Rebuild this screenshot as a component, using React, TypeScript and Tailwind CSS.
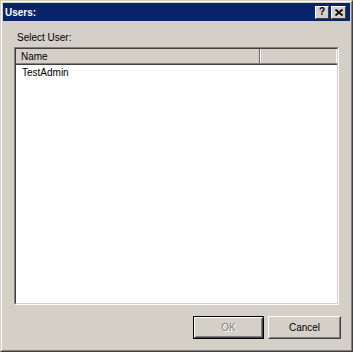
export default function App() {
  const font = { fontFamily: '"Liberation Sans", Arial, sans-serif' };
  return (
    <div
      className="w-[353px] h-[352px] bg-[#d4d0c8] border border-t-[#d4d0c8] border-l-[#d4d0c8] border-b-[#404040] border-r-[#404040] text-[10px] leading-[12px] text-black"
      style={font}
    >
      <div className="h-full border border-t-white border-l-white border-b-[#808080] border-r-[#808080] p-px flex flex-col">
        {/* Title bar */}
        <div className="h-[18px] bg-[#0a246a] flex items-center justify-between pl-[2px] pr-[4px]">
          <span className="text-white font-bold text-[10px] leading-[12px] mt-[1px]">Users:</span>
          <div className="flex gap-[2px] items-center">
            <div className="w-[14px] h-[13px] bg-[#d4d0c8] border border-t-white border-l-white border-b-[#404040] border-r-[#404040] flex items-center justify-center">
              <span className="font-bold text-[10px] leading-[10px] text-black">?</span>
            </div>
            <div className="w-[15px] h-[13px] bg-[#d4d0c8] border border-t-white border-l-white border-b-[#404040] border-r-[#404040] flex items-center justify-center">
              <svg width="8" height="7" viewBox="0 0 8 7">
                <path d="M0.5 0.5 L7.5 6.5 M7.5 0.5 L0.5 6.5" stroke="#000" strokeWidth="1.7" />
              </svg>
            </div>
          </div>
        </div>

        {/* Body */}
        <div className="flex flex-col flex-1">
          <div className="mt-[11px] pl-[14px]">Select User:</div>
          <div className="ml-[11px] mt-[3px] w-[325px] h-[258px] border border-t-[#808080] border-l-[#808080] border-b-white border-r-white">
            <div className="h-full border border-t-[#404040] border-l-[#404040] border-b-[#d4d0c8] border-r-[#d4d0c8] bg-white flex flex-col">
              <div className="h-[16px] flex border-b border-b-[#404040]">
                <div className="flex-1 flex border-b border-b-[#808080]">
                  <div className="w-[244px] bg-[#d4d0c8] border-r border-r-[#6a6a6a] pl-[5px] flex items-center">
                    <span className="mt-[1px]">Name</span>
                  </div>
                  <div className="flex-1 bg-[#d4d0c8] border-l border-l-white mr-px"></div>
                </div>
              </div>
              <div className="pl-[6px] pt-[2px]">TestAdmin</div>
            </div>
          </div>

          <div className="mt-[11px] flex justify-end gap-[4px] pr-[9px]">
            <div className="w-[71px] h-[23px] border border-black">
              <div className="h-full border border-t-white border-l-white border-b-[#404040] border-r-[#404040]">
                <div className="h-full border border-t-[#d4d0c8] border-l-[#d4d0c8] border-b-[#808080] border-r-[#808080] flex items-center justify-center">
                  <span className="text-[#808080] [text-shadow:1px_1px_0_#ffffff]">OK</span>
                </div>
              </div>
            </div>
            <div className="w-[73px] h-[23px] border border-t-white border-l-white border-b-[#404040] border-r-[#404040]">
              <div className="h-full border border-t-[#d4d0c8] border-l-[#d4d0c8] border-b-[#808080] border-r-[#808080] flex items-center justify-center">
                <span>Cancel</span>
              </div>
            </div>
          </div>
        </div>
      </div>
    </div>
  );
}
